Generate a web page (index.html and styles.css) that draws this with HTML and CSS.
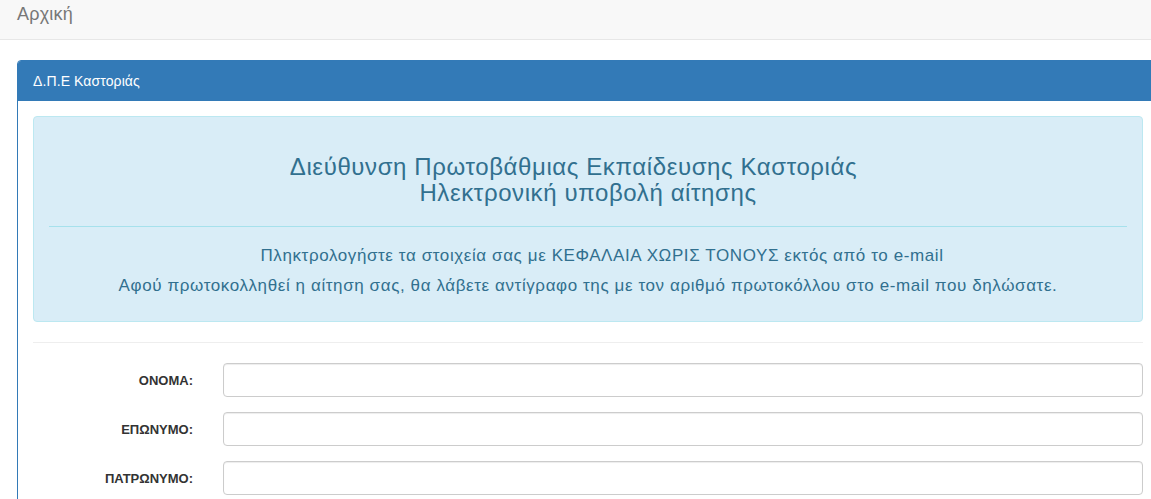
FILE: index.html
```html
<!DOCTYPE html>
<html lang="el">
<head>
    <meta charset="UTF-8">
    <meta name="viewport" content="width=device-width, initial-scale=1.0">
    <title>Ηλεκτρονική υποβολή αίτησης</title>
    <link rel="stylesheet" href="styles.css">
</head>
<body>
    <nav class="navbar">
        <a href="#" class="navbar-brand">Αρχική</a>
    </nav>
    <main class="container">
        <div class="panel">
            <div class="panel-heading">Δ.Π.Ε Καστοριάς</div>
            <div class="panel-body">
                <div class="alert-info">
                    <h3 class="alert-title"><span class="pad-right">Διεύθυνση Πρωτοβάθμιας Εκπαίδευσης Καστοριάς</span><br>Ηλεκτρονική υποβολή αίτησης</h3>
                    <hr class="alert-rule">
                    <p class="alert-text pad-left">Πληκτρολογήστε τα στοιχεία σας με ΚΕΦΑΛΑΙΑ ΧΩΡΙΣ ΤΟΝΟΥΣ εκτός από το e-mail</p>
                    <p class="alert-text">Αφού πρωτοκολληθεί η αίτηση σας, θα λάβετε αντίγραφο της με τον αριθμό πρωτοκόλλου στο e-mail που δηλώσατε.</p>
                </div>
                <hr class="divider">
                <form class="form-horizontal" onsubmit="return false">
                    <div class="form-group">
                        <label for="onoma">ΟΝΟΜΑ:</label>
                        <input type="text" id="onoma" class="form-control">
                    </div>
                    <div class="form-group">
                        <label for="eponymo">ΕΠΩΝΥΜΟ:</label>
                        <input type="text" id="eponymo" class="form-control">
                    </div>
                    <div class="form-group">
                        <label for="patronymo">ΠΑΤΡΩΝΥΜΟ:</label>
                        <input type="text" id="patronymo" class="form-control">
                    </div>
                </form>
            </div>
        </div>
    </main>
</body>
</html>
```

FILE: styles.css
```css
body {
    margin: 0;
    padding: 0;
    font-family: "Liberation Sans", Arial, sans-serif;
    font-size: 14px;
    color: #333;
    background-color: #fff;
    overflow: hidden;
}
.navbar {
    height: 39px;
    background-color: #f8f8f8;
    border-bottom: 1px solid #e7e7e7;
    display: flex;
    align-items: center;
    padding-left: 17px;
}
.navbar-brand {
    font-size: 18px;
    color: #777;
    text-decoration: none;
    margin-top: -10px;
    letter-spacing: 0.2px;
}
.container {
    padding: 20px 0 0 17px;
}
.panel {
    width: 1140px;
    border: 1px solid #337ab7;
    border-radius: 4px;
    background-color: #fff;
}
.panel-heading {
    background-color: #337ab7;
    color: #fff;
    font-size: 14px;
    line-height: 20px;
    padding: 10px 15px;
    border-radius: 3px 3px 0 0;
    letter-spacing: 0.1px;
}
.panel-body {
    padding: 15px;
}
.alert-info {
    background-color: #d9edf7;
    border: 1px solid #bce8f1;
    border-radius: 4px;
    color: #31708f;
    padding: 15px;
    text-align: center;
}
.alert-title {
    font-size: 24px;
    font-weight: normal;
    line-height: 26px;
    letter-spacing: 0.6px;
    margin: 22px 0 20px;
}
.pad-right {
    padding-right: 29px;
}
.pad-left {
    padding-left: 28px;
}
.alert-rule {
    border: 0;
    border-top: 1px solid #a6e1ec;
    margin: 0 0 19px;
}
.alert-text {
    font-size: 17px;
    line-height: 20px;
    letter-spacing: 0.6px;
    margin: 0 0 10px;
}
.divider {
    border: 0;
    border-top: 1px solid #eee;
    margin: 20px 0 20px;
}
.form-group {
    display: flex;
    align-items: center;
    margin-bottom: 15px;
}
.form-group label {
    width: 160px;
    text-align: right;
    font-size: 13px;
    font-weight: bold;
    padding-right: 30px;
}
.form-control {
    flex: 1;
    height: 34px;
    box-sizing: border-box;
    border: 1px solid #ccc;
    border-radius: 4px;
    box-shadow: inset 0 1px 1px rgba(0, 0, 0, 0.075);
    padding: 6px 12px;
    font-size: 14px;
}
```
